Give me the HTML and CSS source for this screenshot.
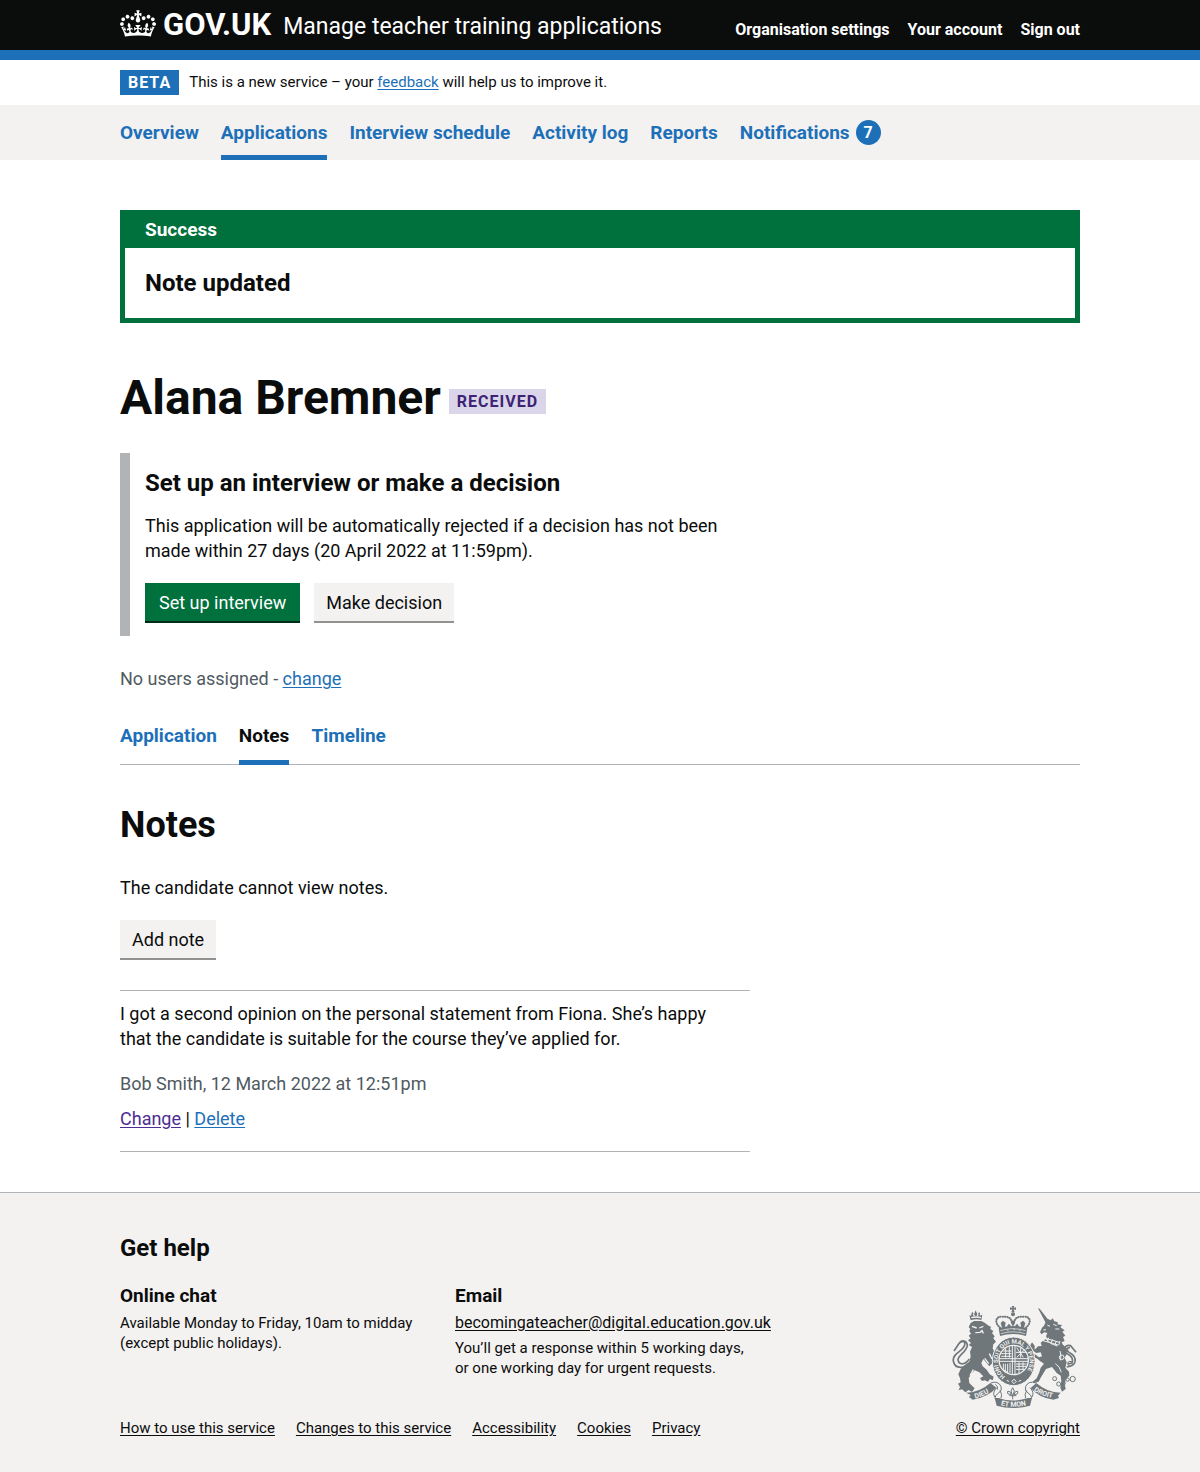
FILE: index.html
```html
<!DOCTYPE html>
<html lang="en">
<head>
  <meta charset="utf-8">
  <meta name="viewport" content="width=device-width, initial-scale=1">
  <title>Alana Bremner – Notes – Manage teacher training applications – GOV.UK</title>
  <link rel="stylesheet" href="styles.css">
</head>
<body>
  <header class="header">
    <div class="container header__inner">
      <div class="header__brand">
        <a class="header__logo" href="#">
          <svg class="header__crown" viewBox="0 0 132 97" width="36" height="27" aria-hidden="true"><path fill="currentColor" fill-rule="evenodd" d="M25 30.2c3.5 1.5 7.7-.2 9.1-3.7 1.5-3.6-.2-7.8-3.9-9.2-3.6-1.4-7.6.3-9.1 3.9-1.4 3.5.3 7.5 3.9 9zM9 39.5c3.6 1.5 7.8-.2 9.2-3.7 1.5-3.6-.2-7.8-3.9-9.1-3.6-1.5-7.6.2-9.1 3.8-1.4 3.5.3 7.5 3.8 9zM4.4 57.2c3.5 1.5 7.7-.2 9.1-3.8 1.5-3.6-.2-7.7-3.9-9.1-3.5-1.5-7.6.3-9.1 3.8-1.4 3.5.3 7.6 3.9 9.1zm38.3-21.4c3.5 1.5 7.7-.2 9.1-3.8 1.5-3.6-.2-7.7-3.9-9.1-3.6-1.5-7.6.3-9.1 3.8-1.3 3.6.4 7.7 3.9 9.1zm64.4-5.6c-3.6 1.5-7.8-.2-9.1-3.7-1.5-3.6.2-7.8 3.8-9.2 3.6-1.4 7.7.3 9.2 3.9 1.3 3.5-.4 7.5-3.9 9zm15.9 9.3c-3.6 1.5-7.7-.2-9.1-3.7-1.5-3.6.2-7.8 3.7-9.1 3.6-1.5 7.7.2 9.2 3.8 1.5 3.5-.3 7.5-3.8 9zm4.7 17.7c-3.6 1.5-7.8-.2-9.2-3.8-1.5-3.6.2-7.7 3.9-9.1 3.6-1.5 7.7.3 9.2 3.8 1.3 3.5-.4 7.6-3.9 9.1zM89.3 35.8c-3.6 1.5-7.8-.2-9.2-3.8-1.4-3.6.2-7.7 3.9-9.1 3.6-1.5 7.7.3 9.2 3.8 1.4 3.6-.3 7.7-3.9 9.1zM69.7 17.7l8.9 4.7V9.3l-8.9 2.8c-.2-.3-.5-.6-.9-.9L72.4 0H59.6l3.5 11.2c-.3.3-.6.5-.9.9l-8.8-2.8v13.1l8.8-4.7c.3.3.6.7.9.9l-5 15.4v.1c-.2.8-.4 1.6-.4 2.4 0 4.1 3.1 7.5 7 8.1h.2c.3 0 .7.1 1 .1.4 0 .7 0 1-.1h.2c4-.6 7.1-4.1 7.1-8.1 0-.8-.1-1.7-.4-2.4V34l-5.1-15.4c.4-.2.7-.6 1-.9zM66 92.8c16.9 0 32.8 1.1 47.1 3.2 4-16.9 8.9-26.7 14-33.5l-9.6-3.4c1 4.9 1.1 7.2 0 10.2-1.5-1.4-3-4.3-4.2-8.7L108.6 76c2.8-2 5-3.2 7.5-3.3-4.4 9.4-10 11.9-13.6 11.2-4.3-.8-6.3-4.6-5.6-7.9 1-4.7 5.7-5.9 8-.5 4.3-8.7-3-11.4-7.6-8.8 7.1-7.2 7.9-13.5 2.1-21.1-8 6.1-8.1 12.3-4.5 20.8-4.7-5.4-12.1-2.5-9.5 6.2 3.4-5.2 7.9-2 7.2 3.1-.6 4.3-6.4 7.8-13.5 7.2-10.3-.9-10.9-8-11.2-13.8 2.5-.5 7.1 1.8 11 7.3L80.2 60c-4.1 4.4-8 5.3-12.3 5.4 1.4-4.4 8-11.6 8-11.6H55.5s6.4 7.2 7.9 11.6c-4.2-.1-8-1-12.3-5.4l1.4 16.4c3.9-5.5 8.5-7.7 10.9-7.3-.3 5.8-.9 12.8-11.1 13.8-7.2.6-12.9-2.9-13.5-7.2-.7-5 3.8-8.3 7.1-3.1 2.7-8.7-4.6-11.6-9.4-6.2 3.7-8.5 3.6-14.7-4.6-20.8-5.8 7.6-5 13.9 2.2 21.1-4.7-2.6-11.9.1-7.7 8.8 2.3-5.5 7.1-4.2 8.1.5.7 3.3-1.3 7.1-5.7 7.9-3.5.7-9-1.8-13.5-11.2 2.5.1 4.7 1.3 7.5 3.3l-4.7-15.4c-1.2 4.4-2.7 7.2-4.3 8.7-1.1-3-.9-5.3 0-10.2l-9.5 3.4c5 6.9 9.9 16.7 14 33.5 14.8-2.1 30.8-3.2 47.7-3.2z"/></svg>
          <span>GOV.UK</span>
        </a>
        <a class="header__service" href="#">Manage teacher training applications</a>
      </div>
      <nav class="header__nav" aria-label="Account">
        <a href="#">Organisation settings</a>
        <a href="#">Your account</a>
        <a href="#">Sign out</a>
      </nav>
    </div>
  </header>

  <div class="container phase-banner">
    <strong class="tag">Beta</strong>
    <span>This is a new service – your <a class="link" href="#">feedback</a> will help us to improve it.</span>
  </div>

  <nav class="primary-nav" aria-label="Primary">
    <ul class="container primary-nav__list">
      <li><a href="#">Overview</a></li>
      <li><a href="#" aria-current="page">Applications</a></li>
      <li><a href="#">Interview schedule</a></li>
      <li><a href="#">Activity log</a></li>
      <li><a href="#">Reports</a></li>
      <li><a href="#">Notifications <span class="count">7</span></a></li>
    </ul>
  </nav>

  <main class="container main">
    <section class="success" role="alert" aria-labelledby="success-title">
      <h2 class="success__title" id="success-title">Success</h2>
      <p class="success__message">Note updated</p>
    </section>

    <div class="title-row">
      <h1 class="heading-xl">Alana Bremner</h1>
      <strong class="tag tag--purple">Received</strong>
    </div>

    <section class="inset">
      <h2 class="heading-m">Set up an interview or make a decision</h2>
      <p>This application will be automatically rejected if a decision has not been made within 27 days (20 April 2022 at 11:59pm).</p>
      <div class="button-group">
        <button class="button" type="button">Set up interview</button>
        <button class="button button--secondary" type="button">Make decision</button>
      </div>
    </section>

    <p class="assigned">No users assigned - <a class="link" href="#">change</a></p>

    <nav class="tabs" aria-label="Application sections">
      <a href="#">Application</a>
      <a href="#" aria-current="page">Notes</a>
      <a href="#">Timeline</a>
    </nav>

    <h2 class="heading-l">Notes</h2>
    <p class="intro">The candidate cannot view notes.</p>
    <button class="button button--secondary" type="button">Add note</button>

    <article class="note">
      <p class="note__text">I got a second opinion on the personal statement from Fiona. She’s happy that the candidate is suitable for the course they’ve applied for.</p>
      <p class="note__meta">Bob Smith, 12 March 2022 at 12:51pm</p>
      <p class="note__actions"><a class="link link--visited" href="#">Change</a> | <a class="link" href="#">Delete</a></p>
    </article>
  </main>

  <footer class="footer">
    <div class="container">
      <h2 class="heading-m">Get help</h2>
      <div class="footer__body">
        <div class="footer__main">
          <div class="footer__columns">
            <section>
              <h3 class="heading-s">Online chat</h3>
              <p>Available Monday to Friday, 10am to midday<br>(except public holidays).</p>
            </section>
            <section>
              <h3 class="heading-s">Email</h3>
              <p class="footer__email"><a href="#">becomingateacher@digital.education.gov.uk</a></p>
              <p>You’ll get a response within 5 working days,<br>or one working day for urgent requests.</p>
            </section>
          </div>
          <nav class="footer__links" aria-label="Footer">
            <a href="#">How to use this service</a>
            <a href="#">Changes to this service</a>
            <a href="#">Accessibility</a>
            <a href="#">Cookies</a>
            <a href="#">Privacy</a>
          </nav>
        </div>
        <a class="footer__copyright" href="#">
          <svg class="crest" viewBox="36 33 375 306" width="125" height="102" aria-hidden="true">
            <defs>
              <path id="garter-path" d="M196 244A48 53 0 1 1 246 244"/>
              <path id="motto-left" d="M106 311Q134 304 160 284"/>
              <path id="motto-mid" d="M182 331Q219 340 263 330"/>
              <path id="motto-right" d="M281 287Q304 303 338 309"/>
            </defs>
            <!-- tails -->
            <g class="crest__line" stroke-width="5">
              <path d="M92 200C78 222 44 224 40 198C36 176 68 170 74 150C78 134 60 138 54 150L42 168M88 192C74 212 56 210 54 194C56 178 82 170 82 150C80 136 66 134 58 144"/>
              <path d="M384 206C404 208 400 186 384 178C366 168 374 148 392 152L408 172M380 216C412 214 412 186 390 174C378 168 380 156 390 158"/>
            </g>
            <!-- lion -->
            <g class="crest__fill">
              <path d="M92 76L88 60L93 63L96 50L102 58L107 46L112 58L119 51L120 62L127 59L124 75Q108 70 92 76Z"/>
              <path d="M92 84L102 78L124 78L134 83L146 92L153 95L151 102L160 108L156 114L164 124L160 130L168 140L160 148L158 160L164 172L170 186L168 200L170 212L162 216L155 206L148 214L140 204L130 192L124 204L128 214L140 224L149 238L161 245L158 256L150 252L144 260L134 256L126 258L120 250L130 244L118 232L104 226L94 236L86 250L88 264L96 272L104 280L96 291L86 285L76 292L66 283L56 286L60 276L54 266L62 262L60 250L55 238L62 222L74 210L88 200L92 184L90 170L96 156L86 150L93 144L84 136L92 130L86 122L93 116L88 108L91 102L86 96Z"/>
            </g>
            <g class="crest__cut" stroke-width="4">
              <path d="M96 94L110 99M118 99L130 94M106 113L120 112L126 107L130 115M94 68Q108 64 123 68M100 57L103 63M114 57L112 63M100 224L90 242M134 190L146 206M148 176L156 192"/>
            </g>
            <!-- unicorn -->
            <g class="crest__fill">
              <path d="M294 40L299 41L326 76L317 83Z"/>
              <path d="M316 83L324 72L332 76L338 70L343 79L354 82L352 88L366 90L361 97L374 106L367 110L376 122L369 126L374 138L365 142L370 152L354 158L350 150L336 146L326 138L318 124L322 114L312 112L305 118L300 112L306 98L312 92Z"/>
              <path d="M284 164L294 154L305 153L302 143L316 132L334 148L356 156L370 150L380 160L382 174L374 188L380 202L376 218L387 230L388 242L378 252L374 266L377 282L366 290L361 278L364 258L362 242L350 234L336 216L318 222L312 232L302 248L296 260L283 264L278 260L290 250L298 232L302 218L312 206L300 198L290 190L278 188L274 178L285 178L297 187L306 184L302 172L288 174L274 162L270 152L276 142L284 152Z"/>
            </g>
            <g class="crest__cut" stroke-width="3">
              <path d="M322 90L330 94M310 105L318 104M340 88L350 92M346 102L358 102M306 136L354 150M310 128L358 142M314 126L312 136M326 128L322 140M337 133L334 144M349 138L346 147M360 138L356 151"/>
              <circle cx="365" cy="187" r="7"/><path d="M346 206Q360 214 364 232M360 168Q364 178 362 196"/>
            </g>
            <g class="crest__line" stroke-width="3">
              <circle cx="390" cy="206" r="7"/><circle cx="398" cy="252" r="8"/><circle cx="383" cy="254" r="5"/><circle cx="356" cy="267" r="6"/><circle cx="344" cy="251" r="6"/><circle cx="371" cy="265" r="5"/>
            </g>
            <!-- garter and shield -->
            <ellipse class="crest__garter" cx="221" cy="199" rx="64" ry="73" stroke-width="3"/>
            <text class="crest__text" font-size="18"><textPath href="#garter-path">HONI SOIT QUI MAL Y PENSE</textPath></text>
            <circle class="crest__cut" cx="221" cy="195" r="44" stroke-width="4"/>
            <g class="crest__cut" stroke-width="3">
              <path d="M217 152V238M225 152V238M178 191H264M178 199H264"/>
              <path d="M190 168L214 168M184 176L214 176M184 184L214 184M197 160V188M208 156V188M230 158L250 187M230 187L254 164M228 172H258M242 158V188M190 206L190 224L206 234M196 206V230M203 206V232M210 204V234M228 207H260M228 214H258M228 223H252M237 202V234M249 202V226"/>
            </g>
            <path class="crest__cut" stroke-width="3" d="M200 256L207 259M236 259L243 256M215 259L222 253L229 259L222 266Z"/>
            <!-- royal crown -->
            <g class="crest__fill">
              <path d="M215 33H223L221 39L228 37V45L221 43L224 52H214L217 43L210 45V37L217 39Z"/>
              <circle cx="219" cy="58" r="6"/>
              <path d="M176 100Q219 86 262 100L258 123Q219 111 180 123Z"/>
              <path d="M219 74L225 84L221 92H217L213 84ZM189 77L197 83L194 98H186L182 84ZM249 77L256 84L252 98H244L241 83Z"/>
              <path d="M207 86L213 93L207 99L201 93ZM231 86L237 93L231 99L225 93Z"/>
            </g>
            <path class="crest__line" stroke-width="6" stroke-linecap="round" stroke-dasharray="1 6" d="M180 98C160 80 170 63 187 65C204 64 214 68 216 84M258 98C278 80 268 63 251 65C234 64 224 68 222 84"/>
            <path class="crest__cut" stroke-width="2" d="M181 107Q219 95 257 107M183 116Q219 105 255 116M200 104L206 108M219 101L225 105M236 104L242 108"/>
            <!-- motto ribbon -->
            <g class="crest__fill">
              <path d="M78 293Q116 294 151 264L169 278Q145 306 98 314L87 306L92 300Z"/>
              <path d="M289 264Q320 292 362 293L354 302L357 309L340 314Q296 308 272 279Z"/>
              <path d="M164 309L176 309Q218 324 264 309L276 309L270 332Q219 346 170 332Z"/>
            </g>
            <g class="crest__line" stroke-width="3">
              <path d="M152 264Q174 256 183 274Q188 286 176 294Q164 301 165 310M170 278Q156 292 164 306M166 268Q176 274 172 284M288 264Q266 256 257 274Q252 286 264 294Q276 301 275 310M270 278Q284 292 276 306M180 286Q188 300 183 309M260 286Q252 300 257 309"/>
              <path d="M218 278L223 288L218 304L213 288ZM214 298Q200 300 203 289Q210 286 214 298M222 298Q236 300 233 289Q226 286 222 298M208 302H229M218 302V313"/>
            </g>
            <g class="crest__text" font-size="21">
              <text><textPath href="#motto-left">DIEU</textPath></text>
              <text><textPath href="#motto-mid">ET MON</textPath></text>
              <text><textPath href="#motto-right">DROIT</textPath></text>
            </g>
          </svg>
          <span>© Crown copyright</span>
        </a>
      </div>
    </div>
  </footer>
</body>
</html>
```
FILE: styles.css
```css
:root {
  --black: #0b0c0c;
  --blue: #1d70b8;
  --green: #00703c;
  --purple: #4c2c92;
  --grey: #505a5f;
  --border: #b1b4b6;
  --light: #f3f2f1;
}

* {
  box-sizing: border-box;
}

body {
  margin: 0;
  background: #fff;
  color: var(--black);
  font-family: Roboto, "Liberation Sans", sans-serif;
  font-size: 18px;
  line-height: 25px;
}

h1, h2, h3, p, ul {
  margin: 0;
  padding: 0;
}

.container {
  max-width: 960px;
  margin: 0 auto;
}

.link {
  color: var(--blue);
  text-decoration: underline;
  text-underline-offset: 2px;
}

.link--visited {
  color: var(--purple);
}

/* Header */

.header {
  background: var(--black);
  border-bottom: 10px solid var(--blue);
  color: #fff;
}

.header a {
  color: inherit;
  text-decoration: none;
}

.header__inner {
  display: flex;
  justify-content: space-between;
  height: 50px;
}

.header__brand {
  display: flex;
  align-items: flex-start;
  gap: 12px;
  padding-top: 10px;
}

.header__logo {
  display: flex;
  gap: 7px;
  font-size: 31px;
  font-weight: 700;
  line-height: 30px;
}

.header__crown {
  display: block;
}

.header__service {
  font-size: 23px;
  line-height: 34px;
}

.header__nav {
  display: flex;
  gap: 18px;
  padding-top: 20px;
  font-size: 16px;
  font-weight: 700;
  line-height: 20px;
}

/* Phase banner */

.phase-banner {
  display: flex;
  align-items: center;
  gap: 10px;
  padding: 10px 0;
  font-size: 15px;
}

.tag {
  padding: 0 8px;
  background: var(--blue);
  color: #fff;
  font-size: 16px;
  font-weight: 700;
  letter-spacing: 1px;
  line-height: 25px;
  text-transform: uppercase;
}

.tag--purple {
  background: #dbd5e9;
  color: #3d2375;
}

/* Primary navigation */

.primary-nav {
  background: var(--light);
}

.primary-nav__list {
  display: flex;
  gap: 22px;
  list-style: none;
  font-size: 19px;
  font-weight: 700;
}

.primary-nav a {
  display: flex;
  align-items: center;
  gap: 6px;
  padding: 15px 0 10px;
  border-bottom: 5px solid transparent;
  color: var(--blue);
  text-decoration: none;
}

.primary-nav a[aria-current] {
  border-color: var(--blue);
}

.count {
  width: 25px;
  border-radius: 50%;
  background: var(--blue);
  color: #fff;
  font-size: 16px;
  text-align: center;
}

/* Main */

.main {
  padding: 50px 0 40px;
}

.success {
  border: 5px solid var(--green);
}

.success__title {
  padding: 2px 20px 6px;
  background: var(--green);
  color: #fff;
  font-size: 19px;
}

.success__message {
  padding: 20px;
  font-size: 24px;
  font-weight: 700;
  line-height: 30px;
}

.title-row {
  display: flex;
  align-items: center;
  gap: 8px;
  margin: 50px 0 30px;
}

.title-row .tag {
  margin-top: 6px;
}

.heading-xl {
  font-size: 48px;
  line-height: 50px;
}

.heading-l {
  font-size: 36px;
  line-height: 40px;
}

.heading-m {
  font-size: 24px;
  line-height: 30px;
}

.heading-s {
  margin-bottom: 5px;
  font-size: 19px;
  line-height: 25px;
}

.inset {
  max-width: 630px;
  padding: 15px 0 13px 15px;
  border-left: 10px solid var(--border);
}

.inset p {
  margin: 15px 0 20px;
}

.button-group {
  display: flex;
  gap: 14px;
}

.button {
  display: block;
  height: 40px;
  padding: 0 14px;
  border: 0;
  border-bottom: 2px solid #002d18;
  background: var(--green);
  color: #fff;
  font: inherit;
}

.button--secondary {
  padding: 0 12px;
  border-color: #929191;
  background: var(--light);
  color: var(--black);
}

.assigned {
  margin-top: 30px;
  color: var(--grey);
}

.tabs {
  display: flex;
  gap: 22px;
  margin: 32px 0 40px;
  box-shadow: inset 0 -1px var(--border);
  font-size: 19px;
  font-weight: 700;
}

.tabs a {
  padding-bottom: 12px;
  border-bottom: 5px solid transparent;
  color: var(--blue);
  text-decoration: none;
}

.tabs a[aria-current] {
  border-color: var(--blue);
  color: var(--black);
}

.intro {
  margin: 30px 0 20px;
}

.note {
  max-width: 630px;
  margin-top: 30px;
  padding: 10px 20px 20px 0;
  border-top: 1px solid var(--border);
  border-bottom: 1px solid var(--border);
}

.note__meta {
  margin: 20px 0 10px;
  color: var(--grey);
}

/* Footer */

.footer {
  padding: 40px 0 34px;
  border-top: 1px solid var(--border);
  background: var(--light);
  font-size: 15px;
  line-height: 20px;
}

.footer a {
  color: var(--black);
  text-decoration: underline;
  text-underline-offset: 2px;
}

.footer__body {
  display: flex;
  align-items: flex-end;
  justify-content: space-between;
  margin-top: 20px;
}

.footer__columns {
  display: grid;
  grid-template-columns: 305px auto;
  gap: 30px;
}

.footer__email {
  margin-bottom: 5px;
  font-size: 16px;
}

.footer__links {
  display: flex;
  gap: 21px;
  margin-top: 40px;
}

.footer__copyright {
  display: flex;
  flex-direction: column;
  align-items: flex-end;
  gap: 10px;
}

.crest {
  display: block;
  margin-right: 3px;
}

.crest__fill,
.crest__garter {
  fill: #6f777b;
}

.crest__line {
  fill: none;
  stroke: #6f777b;
}

.crest__cut {
  fill: none;
  stroke: var(--light);
}

.crest__garter {
  stroke: var(--light);
}

.crest__text {
  fill: var(--light);
  font-weight: 700;
}
```
